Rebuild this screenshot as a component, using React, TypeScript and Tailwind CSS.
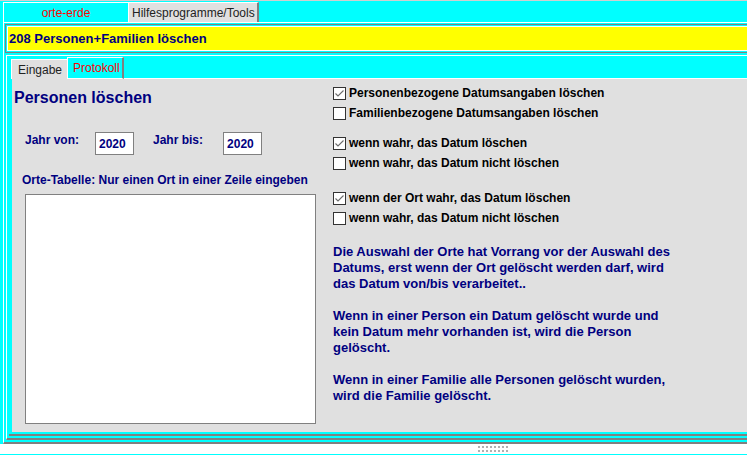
import React from "react";

function Check({ checked }: { checked?: boolean }) {
  return (
    <svg width="13" height="13" viewBox="0 0 13 13" className="shrink-0">
      <rect x="0.5" y="0.5" width="12" height="12" fill="#ffffff" stroke="#333333" />
      {checked && (
        <polyline points="2.5,6.5 5,9 10.5,3.5" fill="none" stroke="#6b6b6b" strokeWidth="1.1" />
      )}
    </svg>
  );
}

function Row({ label, checked, className = "" }: { label: string; checked?: boolean; className?: string }) {
  return (
    <div className={`flex h-[20px] items-center gap-[3px] ${className}`}>
      <Check checked={checked} />
      <span className="whitespace-nowrap text-[12px] font-bold text-black">{label}</span>
    </div>
  );
}

function YearInput({ value }: { value: string }) {
  return (
    <div className="flex h-[23px] w-[39px] items-center border border-[#808080] bg-white pl-[3px] text-[12px] font-bold text-[#000080]">
      {value}
    </div>
  );
}

const dots = [0, 1, 2, 3, 4, 5, 6, 7];

export default function App() {
  return (
    <div className="flex h-[455px] w-[747px] flex-col overflow-hidden bg-[#00ffff] font-['Liberation_Sans',Arial,sans-serif] text-[12px]">
      <div className="h-px shrink-0 bg-[#d0d0d0]" />

      {/* top tabs */}
      <div className="flex h-[21px] shrink-0 items-end pl-[3px]">
        <div className="flex h-[20px] w-[126px] items-center justify-center border-l border-r border-t border-white text-[#ff0000]">
          orte-erde
        </div>
        <div className="flex h-[20px] w-[130px] items-center border-t border-r-2 border-white border-r-[#808080] bg-[#e0e0e0] pl-[3px] text-[#222]">
          Hilfesprogramme/Tools
        </div>
      </div>

      {/* outer frame */}
      <div className="ml-[3px] flex h-[422px] shrink-0 flex-col border-b-2 border-l border-t border-white border-b-[#808080] pb-[2px] pl-px pt-px">
        <div className="shrink-0 border-b border-l border-t border-[#808080] p-px pr-0">
          <div className="flex h-[25px] items-center border-b border-l border-t border-white bg-[#ffff00] pl-px text-[13px] font-bold text-[#000080]">
            208 Personen+Familien löschen
          </div>
        </div>

        {/* inner frame */}
        <div className="ml-px mt-[2px] flex flex-1 flex-col border-b-2 border-l border-t border-white border-b-[#808080] pb-[2px] pl-[2px] pt-px">
          <div className="flex h-[22px] shrink-0 items-end">
            <div className="ml-[2px] flex h-[20px] w-[56px] items-center border-l border-t border-white bg-[#e0e0e0] pl-[6px] text-[#222]">
              Eingabe
            </div>
            <div className="flex h-[22px] w-[57px] items-center border-b border-l border-r-2 border-t border-white border-r-[#808080] pl-[5px] text-[#ff0000]">
              Protokoll
            </div>
            <div className="h-px flex-1 self-end bg-white" />
          </div>

          <div className="flex flex-1 flex-col border-b-2 border-[#808080] pb-[2px]">
            <div className="ml-[3px] flex flex-1 bg-[#e0e0e0]">
              {/* left column */}
              <div className="flex w-[321px] shrink-0 flex-col">
                <div className="ml-[2px] mt-[9px] h-[19px] text-[16px] font-bold leading-[19px] text-[#000080]">
                  Personen löschen
                </div>
                <div className="mt-[25px] flex items-start font-bold text-[#000080]">
                  <span className="ml-[13px] mt-px leading-[14px]">Jahr von:</span>
                  <div className="ml-[16px]">
                    <YearInput value="2020" />
                  </div>
                  <span className="ml-[19px] mt-px leading-[14px]">Jahr bis:</span>
                  <div className="ml-[20px]">
                    <YearInput value="2020" />
                  </div>
                </div>
                <div className="ml-[10px] mt-[18px] whitespace-nowrap font-bold leading-[14px] text-[#000080]">
                  Orte-Tabelle: Nur einen Ort in einer Zeile eingeben
                </div>
                <div className="ml-[13px] mt-[7px] h-[230px] w-[291px] border border-[#808080] bg-white" />
              </div>

              {/* right column */}
              <div className="flex flex-col pt-[4px]">
                <Row label="Personenbezogene Datumsangaben löschen" checked />
                <Row label="Familienbezogene Datumsangaben löschen" />
                <Row label="wenn wahr, das Datum löschen" checked className="mt-[10px]" />
                <Row label="wenn wahr, das Datum nicht löschen" />
                <Row label="wenn der Ort wahr, das Datum löschen" checked className="mt-[15px]" />
                <Row label="wenn wahr, das Datum nicht löschen" />
                <div className="mt-[16px] flex flex-col gap-[16px] whitespace-nowrap text-[13px] font-bold leading-[16px] text-[#000080]">
                  <p>
                    Die Auswahl der Orte hat Vorrang vor der Auswahl des
                    <br />
                    Datums, erst wenn der Ort gelöscht werden darf, wird
                    <br />
                    das Datum von/bis verarbeitet..
                  </p>
                  <p>
                    Wenn in einer Person ein Datum gelöscht wurde und
                    <br />
                    kein Datum mehr vorhanden ist, wird die Person
                    <br />
                    gelöscht.
                  </p>
                  <p>
                    Wenn in einer Familie alle Personen gelöscht wurden,
                    <br />
                    wird die Familie gelöscht.
                  </p>
                </div>
              </div>
            </div>
          </div>
        </div>
      </div>

      {/* splitter */}
      <div className="flex h-[10px] shrink-0 flex-col justify-center gap-[2px] bg-white pl-[478px]">
        <div className="flex gap-[2px]">
          {dots.map((i) => (
            <div key={i} className="h-[2px] w-[2px] bg-[#b0b0b0]" />
          ))}
        </div>
        <div className="flex gap-[2px]">
          {dots.map((i) => (
            <div key={i} className="h-[2px] w-[2px] bg-[#b0b0b0]" />
          ))}
        </div>
      </div>
    </div>
  );
}
